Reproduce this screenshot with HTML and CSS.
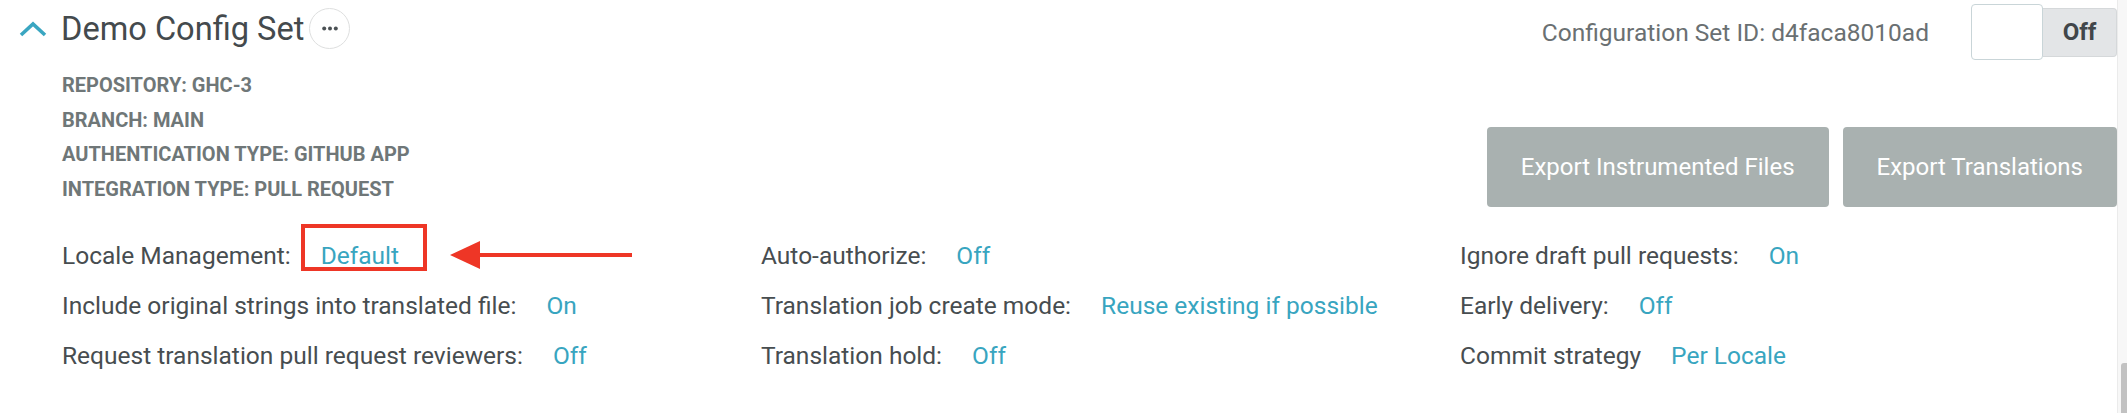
FILE: index.html
```html
<!DOCTYPE html>
<html lang="en">
<head>
    <meta charset="UTF-8">
    <title>Demo Config Set</title>
    <link rel="stylesheet" href="styles.css">
</head>
<body>
    <div class="page">
        <main class="config-set">
            <div class="top">
                <div class="summary">
                    <div class="heading">
                        <svg class="chevron" width="28" height="16" viewBox="0 0 28 16">
                            <polyline points="2,14 14,3 26,14" fill="none" stroke="#3aa6c1" stroke-width="3.6"/>
                        </svg>
                        <h1>Demo Config Set</h1>
                        <button class="more">
                            <svg width="16" height="5" viewBox="0 0 16 5">
                                <circle cx="2.2" cy="2.5" r="2" fill="#4b5154"/>
                                <circle cx="8" cy="2.5" r="2" fill="#4b5154"/>
                                <circle cx="13.8" cy="2.5" r="2" fill="#4b5154"/>
                            </svg>
                        </button>
                    </div>
                    <ul class="meta">
                        <li>Repository: GHC-3</li>
                        <li>Branch: main</li>
                        <li>Authentication type: GitHub App</li>
                        <li>Integration type: Pull Request</li>
                    </ul>
                </div>
                <div class="actions">
                    <div class="id-row">
                        <span class="set-id">Configuration Set ID: d4faca8010ad</span>
                        <div class="toggle">
                            <span class="knob"></span>
                            <span class="state">Off</span>
                        </div>
                    </div>
                    <div class="buttons">
                        <button>Export Instrumented Files</button>
                        <button>Export Translations</button>
                    </div>
                </div>
            </div>

            <div class="settings">
                <div class="setting">
                    <span class="label">Locale Management:</span>
                    <span class="value highlight">Default</span>
                    <svg class="arrow" width="182" height="34" viewBox="0 0 182 34">
                        <line x1="24" y1="17" x2="182" y2="17" stroke="#ee3626" stroke-width="4"/>
                        <polygon points="0,17 30,3 30,31" fill="#ee3626"/>
                    </svg>
                </div>
                <div class="setting">
                    <span class="label">Auto-authorize:</span>
                    <span class="value">Off</span>
                </div>
                <div class="setting">
                    <span class="label">Ignore draft pull requests:</span>
                    <span class="value">On</span>
                </div>

                <div class="setting">
                    <span class="label">Include original strings into translated file:</span>
                    <span class="value">On</span>
                </div>
                <div class="setting">
                    <span class="label">Translation job create mode:</span>
                    <span class="value">Reuse existing if possible</span>
                </div>
                <div class="setting">
                    <span class="label">Early delivery:</span>
                    <span class="value">Off</span>
                </div>

                <div class="setting">
                    <span class="label">Request translation pull request reviewers:</span>
                    <span class="value">Off</span>
                </div>
                <div class="setting">
                    <span class="label">Translation hold:</span>
                    <span class="value">Off</span>
                </div>
                <div class="setting">
                    <span class="label">Commit strategy</span>
                    <span class="value">Per Locale</span>
                </div>
            </div>
        </main>
        <div class="scrollbar"><div class="thumb"></div></div>
    </div>
</body>
</html>
```

FILE: styles.css
```css
* {
    box-sizing: border-box;
}
body {
    margin: 0;
    background-color: #ffffff;
    font-family: Roboto, "Liberation Sans", sans-serif;
    color: #474d50;
}
.page {
    display: flex;
    height: 100vh;
}
.config-set {
    flex: 1;
    padding: 4px 0 0 19px;
}
.top {
    display: flex;
    justify-content: space-between;
}
.summary {
    padding-top: 4px;
}
.heading {
    display: flex;
    align-items: center;
    height: 41px;
}
.chevron {
    display: block;
}
.heading h1 {
    margin: 0 0 0 14px;
    font-size: 32.6px;
    font-weight: 400;
    color: #444a4d;
}
.more {
    width: 41px;
    height: 41px;
    margin-left: 5px;
    padding: 0;
    display: flex;
    justify-content: center;
    align-items: center;
    border: 1.5px solid #dedfdf;
    border-radius: 50%;
    background-color: #ffffff;
}
.meta {
    list-style: none;
    margin: 19px 0 0 43px;
    padding: 0;
}
.meta li {
    line-height: 34.7px;
    font-size: 20px;
    font-weight: 700;
    text-transform: uppercase;
    color: #6f7778;
}
.actions {
    display: flex;
    flex-direction: column;
    align-items: flex-end;
}
.id-row {
    display: flex;
    align-items: center;
    gap: 42px;
}
.set-id {
    font-size: 24.5px;
    color: #6a7072;
}
.toggle {
    display: flex;
    align-items: center;
    height: 56px;
}
.knob {
    width: 72px;
    height: 56px;
    background-color: #ffffff;
    border: 1px solid #c9d5d8;
    border-radius: 4px;
}
.state {
    width: 74px;
    height: 49px;
    display: flex;
    justify-content: center;
    align-items: center;
    background-color: #e3e5e7;
    border: 1px solid #d5d8da;
    border-left: none;
    border-radius: 0 4px 4px 0;
    font-size: 24px;
    font-weight: 700;
    color: #41464a;
}
.buttons {
    display: flex;
    gap: 14px;
    margin-top: 67px;
}
.buttons button {
    height: 80px;
    padding: 0 34px;
    border: none;
    border-radius: 4px;
    background-color: #a9b1b0;
    color: #ffffff;
    font-family: inherit;
    font-size: 24px;
}
.settings {
    display: grid;
    grid-template-columns: 699px 699px 1fr;
    grid-auto-rows: 50px;
    margin-top: 23px;
    padding-left: 43px;
}
.setting {
    display: flex;
    align-items: center;
    white-space: nowrap;
    font-size: 24.5px;
}
.value {
    margin-left: 30px;
    color: #38a5c0;
}
.highlight {
    position: relative;
}
.highlight::after {
    content: '';
    position: absolute;
    left: -20px;
    right: -28px;
    top: -17px;
    bottom: -1px;
    border: 4px solid #ee3626;
}
.arrow {
    display: block;
    margin-left: 51px;
}
.scrollbar {
    width: 10px;
    display: flex;
    flex-direction: column;
    justify-content: flex-end;
    background-color: #f7f7f7;
    border-left: 1px solid #ebebeb;
}
.thumb {
    height: 50px;
    margin-left: 3px;
    background-color: #c2c2c2;
    border-radius: 3px 0 0 0;
}
```
